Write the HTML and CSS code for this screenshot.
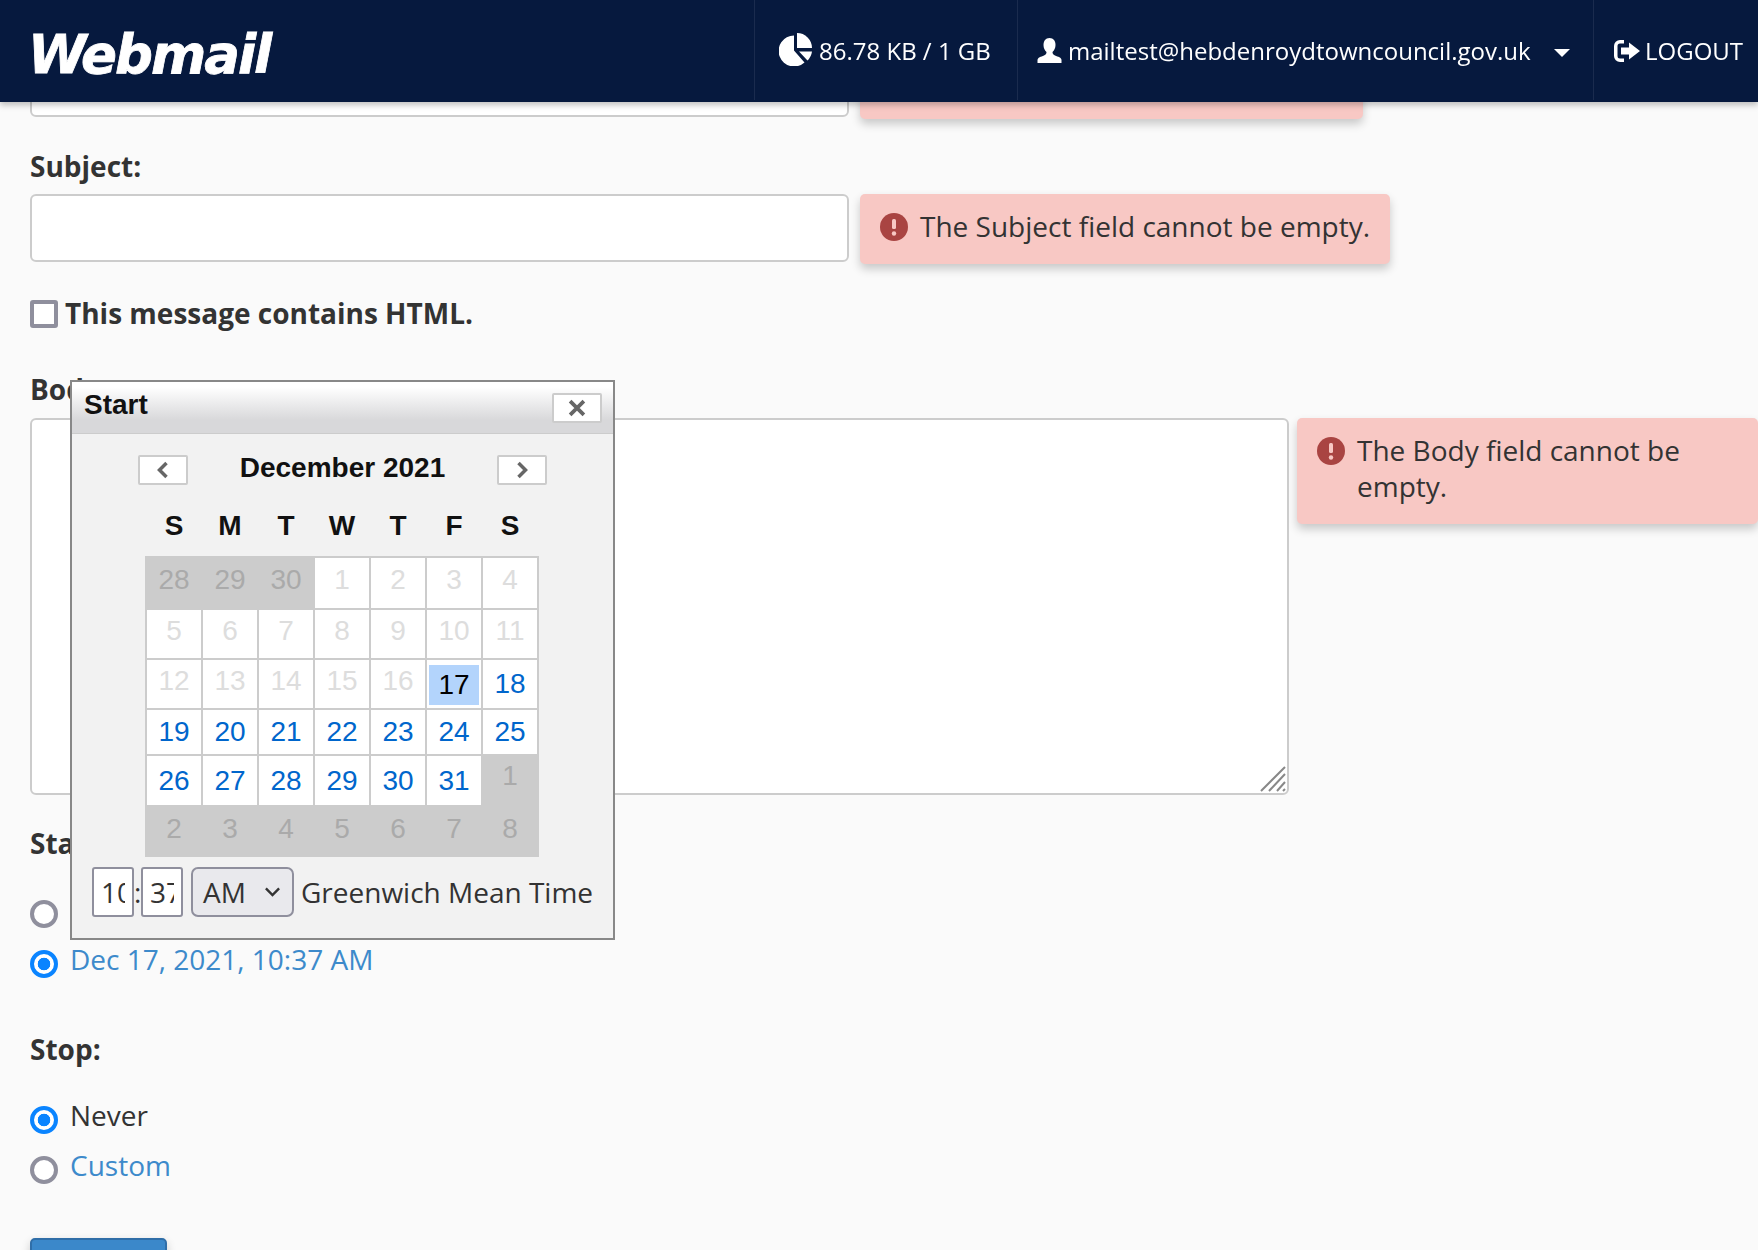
FILE: index.html
```html
<!DOCTYPE html>
<html lang="en">
<head>
<meta charset="utf-8">
<title>Webmail</title>
<link rel="stylesheet" href="styles.css">
</head>
<body>
<header class="topbar">
  <div class="logo">Webmail</div>
  <nav class="topnav">
    <div class="topitem storage">
      <svg class="ico-pie" viewBox="0 0 33 33"><path d="M15 2.500A15.500 15.500 0 1 0 25.500 29.500L15 17.500Z"/><path d="M18 0A15 15 0 0 1 33 15H18Z"/><path d="M20 18.500H33A15.500 15.500 0 0 1 28.500 27.500Z"/></svg>
      <span>86.78 KB / 1 GB</span>
    </div>
    <div class="topitem user">
      <svg class="ico-user" viewBox="0 0 25 25"><path d="M12.500 0C8.500 0 6.500 3 6.500 7C6.500 10 7.800 12.500 9.500 14C9.500 15.500 9 16.500 7 17.500C4 18.800 .5 19.500 .5 22V25H24.500V22C24.500 19.500 21 18.800 18 17.500C16 16.500 15.500 15.500 15.500 14C17.200 12.500 18.500 10 18.500 7C18.500 3 16.500 0 12.500 0Z"/></svg>
      <span>mailtest@hebdenroydtowncouncil.gov.uk</span>
      <span class="caret"></span>
    </div>
    <div class="topitem logout">
      <svg class="ico-logout" viewBox="0 0 26 22"><path d="M10 0H6A6 6 0 0 0 0 6V16A6 6 0 0 0 6 22H10V18.500H6A2.500 2.500 0 0 1 3.500 16V6A2.500 2.500 0 0 1 6 3.500H10Z"/><path d="M15 2.500L26 11L15 19.500V14.500H7V7.500H15Z"/></svg>
      <span>LOGOUT</span>
    </div>
  </nav>
</header>

<main class="form">
  <div class="row first">
    <div class="field short"></div>
    <div class="alert">
      <svg class="ico-alert" viewBox="0 0 28 28"><circle cx="14" cy="14" r="14"/><rect class="mark" x="12" y="6" width="4" height="10" rx="1.500"/><circle class="mark" cx="14" cy="20.500" r="2.200"/></svg>
      <span>The From field cannot be empty.</span>
    </div>
  </div>

  <div class="label subject-label">Subject:</div>
  <div class="row">
    <div class="field short"></div>
    <div class="alert">
      <svg class="ico-alert" viewBox="0 0 28 28"><circle cx="14" cy="14" r="14"/><rect class="mark" x="12" y="6" width="4" height="10" rx="1.500"/><circle class="mark" cx="14" cy="20.500" r="2.200"/></svg>
      <span>The Subject field cannot be empty.</span>
    </div>
  </div>

  <div class="check-row">
    <span class="checkbox"></span>
    <span class="label">This message contains HTML.</span>
  </div>

  <div class="label body-label">Body:</div>
  <div class="row body-row">
    <div class="field area">
      <svg class="grip" viewBox="0 0 26 26"><path d="M1 25L25 1M9 25L25 8M17 25L25 16M23 25L25 23"/></svg>
    </div>
    <div class="alert alert-wide">
      <svg class="ico-alert" viewBox="0 0 28 28"><circle cx="14" cy="14" r="14"/><rect class="mark" x="12" y="6" width="4" height="10" rx="1.500"/><circle class="mark" cx="14" cy="20.500" r="2.200"/></svg>
      <span>The Body field cannot be empty.</span>
    </div>
  </div>

  <div class="label start-label">Start:</div>
  <div class="radios start-radios">
    <div class="radio-row"><span class="radio"></span></div>
    <div class="radio-row"><span class="radio on"></span><span class="link">Dec 17, 2021, 10:37 AM</span></div>
  </div>

  <div class="label stop-label">Stop:</div>
  <div class="radios stop-radios">
    <div class="radio-row"><span class="radio on"></span><span>Never</span></div>
    <div class="radio-row"><span class="radio"></span><span class="link">Custom</span></div>
  </div>

  <div class="submit"></div>
</main>

<section class="popup">
  <div class="popup-title">
    <span>Start</span>
    <span class="btn btn-close"><svg viewBox="0 0 16 16"><path d="M2.500 2.500L13.500 13.500M13.500 2.500L2.500 13.500"/></svg></span>
  </div>
  <div class="popup-body">
    <div class="cal-nav">
      <span class="btn btn-nav"><svg viewBox="0 0 12 16"><path d="M9 2L3 8L9 14"/></svg></span>
      <span class="cal-month">December 2021</span>
      <span class="btn btn-nav"><svg viewBox="0 0 12 16"><path d="M3 2L9 8L3 14"/></svg></span>
    </div>
    <div class="cal-days"><span>S</span><span>M</span><span>T</span><span>W</span><span>T</span><span>F</span><span>S</span></div>
    <table class="cal">
      <tr><td class="out">28</td><td class="out">29</td><td class="out">30</td><td class="past">1</td><td class="past">2</td><td class="past">3</td><td class="past">4</td></tr>
      <tr><td class="past">5</td><td class="past">6</td><td class="past">7</td><td class="past">8</td><td class="past">9</td><td class="past">10</td><td class="past">11</td></tr>
      <tr><td class="past">12</td><td class="past">13</td><td class="past">14</td><td class="past">15</td><td class="past">16</td><td class="today"><span>17</span></td><td>18</td></tr>
      <tr><td>19</td><td>20</td><td>21</td><td>22</td><td>23</td><td>24</td><td>25</td></tr>
      <tr><td>26</td><td>27</td><td>28</td><td>29</td><td>30</td><td>31</td><td class="out up">1</td></tr>
      <tr class="last"><td class="out">2</td><td class="out">3</td><td class="out">4</td><td class="out">5</td><td class="out">6</td><td class="out">7</td><td class="out">8</td></tr>
    </table>
    <div class="time-row">
      <input class="time" type="text" value="10" size="2">
      <span class="colon">:</span>
      <input class="time" type="text" value="37" size="2">
      <span class="select">AM<svg viewBox="0 0 14 10"><path d="M1.500 2L7 7.500L12.500 2"/></svg></span>
      <span class="zone">Greenwich Mean Time</span>
    </div>
  </div>
</section>
</body>
</html>
```
FILE: styles.css
```css
* { box-sizing: border-box; }
html, body { margin: 0; height: 1250px; overflow: hidden; }
body {
  background: #fafafa;
  color: #333;
  font-family: "Open Sans", sans-serif;
  font-size: 28px;
  line-height: 36px;
  position: relative;
}

/* top bar */
.topbar {
  position: fixed;
  top: 0; left: 0; right: 0;
  height: 102px;
  background: #06193e;
  color: #fff;
  display: flex;
  justify-content: space-between;
  box-shadow: 0 3px 6px rgba(0,0,0,.25);
  z-index: 2;
  font-size: 24px;
}
.logo {
  margin: 27px 0 0 28px;
  font-family: "DejaVu Sans", sans-serif;
  font-weight: 700;
  font-style: italic;
  font-size: 53px;
  line-height: 56px;
  letter-spacing: -2px;
  -webkit-text-stroke: .8px #fff;
}
.topnav { display: flex; height: 100px; }
.topitem {
  display: flex;
  align-items: center;
  padding-top: 2px;
  border-left: 1px solid #1a2b4e;
}
.topitem svg { flex: none; }
.storage { width: 263px; padding-left: 24px; gap: 7px; }
.user { width: 576px; padding-left: 19px; gap: 6px; }
.logout { width: 165px; padding-left: 20px; gap: 5px; }
.ico-pie { width: 33px; height: 33px; fill: #fff; margin-top: -3px; }
.ico-user { width: 25px; height: 25px; fill: #fff; margin-top: -2px; }
.ico-logout { width: 26px; height: 22px; fill: #fff; margin-top: -1px; }
.caret {
  margin: 4px 0 0 17px;
  border-top: 8px solid #fff;
  border-left: 8px solid transparent;
  border-right: 8px solid transparent;
}

/* form */
.form { padding: 49px 0 0 30px; }
.label { font-weight: 700; }
.row { display: flex; gap: 11px; align-items: flex-start; }
.field {
  background: #fff;
  border: 2px solid #ccc;
  border-radius: 6px;
  position: relative;
}
.short { width: 819px; height: 68px; flex: none; }
.area { width: 1259px; height: 377px; flex: none; margin-right: -3px; }
.alert {
  display: flex;
  gap: 12px;
  align-items: flex-start;
  background: #f8c8c4;
  border-radius: 5px;
  padding: 14px 20px 20px 20px;
  box-shadow: 0 5px 10px rgba(0,0,0,.2);
}
.first { height: 71px; }
.ico-alert { width: 28px; height: 28px; flex: none; margin-top: 5px; fill: #a94442; }
.ico-alert .mark { fill: #f8c8c4; }
.subject-label { margin-top: 28px; margin-bottom: 10px; }
.check-row {
  display: flex;
  align-items: center;
  gap: 7px;
  height: 36px;
  margin-top: 32px;
}
.check-row .label { margin-top: -2px; }
.checkbox {
  width: 28px; height: 28px;
  background: #fff;
  border: 4px solid #8f8f9d;
  border-radius: 3px;
}
.body-label { margin-top: 39px; margin-bottom: 11px; }
.alert-wide { flex: 1; }
.alert-wide span { max-width: 360px; }
.grip {
  position: absolute;
  right: 1px; bottom: 1px;
  width: 26px; height: 26px;
  stroke: #888;
  stroke-width: 2;
  fill: none;
}
.start-label { margin-top: 30px; }
.radios { display: flex; flex-direction: column; }
.start-radios { margin-top: 30px; }
.stop-label { margin-top: 40px; }
.stop-radios { margin-top: 30px; }
.radio-row { display: flex; gap: 12px; height: 50px; align-items: flex-start; }
.radio {
  width: 28px; height: 28px;
  margin-top: 9px;
  flex: none;
  border-radius: 50%;
  background: #fff;
  border: 4px solid #8f8f9d;
}
.radio.on {
  border-color: #0a84ff;
  background: radial-gradient(circle, #0a84ff 0 6px, #fff 6.600px);
}
.link { color: #3d8acb; }
.submit {
  margin-top: 41px;
  width: 137px; height: 60px;
  background: #3b88ca;
  border: 2px solid #2f6ea8;
  border-radius: 5px;
  box-shadow: 0 4px 10px rgba(0,0,0,.2);
}

/* calendar popup */
.popup {
  position: absolute;
  left: 70px; top: 380px;
  width: 545px; height: 560px;
  background: #f2f2f2;
  border: 2px solid #888;
  z-index: 1;
}
.popup-title {
  height: 52px;
  padding: 0 11px 0 12px;
  display: flex;
  align-items: flex-start;
  justify-content: space-between;
  background: linear-gradient(#fff 10%, #d8d8da 75%);
  border-bottom: 1px solid #ccc;
  font-family: "Liberation Sans", sans-serif;
  font-weight: 700;
  font-size: 28px;
  line-height: 46px;
  color: #111;
}
.btn {
  display: flex;
  align-items: center;
  justify-content: center;
  width: 50px; height: 30px;
  background: #fff;
  border: 2px solid #ccc;
  border-radius: 2px;
}
.btn-close { margin-top: 11px; }
.btn svg { fill: none; stroke: #666; stroke-width: 3; }
.btn-close svg { width: 20px; height: 20px; }
.btn-nav svg { width: 14px; height: 20px; }
.popup-body { padding: 21px 0 0 20px; font-family: "Liberation Sans", sans-serif; font-size: 28px; }
.cal-nav {
  width: 409px;
  margin-left: 46px;
  height: 30px;
  display: flex;
  justify-content: space-between;
  align-items: center;
}
.cal-month { font-weight: 700; color: #111; position: relative; top: -2px; }
.cal-days {
  display: grid;
  grid-template-columns: repeat(7, 56px);
  margin: 23px 0 0 54px;
  font-weight: 700;
  color: #111;
  text-align: center;
}
.cal {
  margin: 12px 0 0 53px;
  border-collapse: collapse;
  table-layout: fixed;
  width: 394px;
}
.cal td {
  padding: 0;
  border: 2px solid #ccc;
  background: #fff;
  color: #06c;
  text-align: center;
  line-height: 30px;
}
.cal tr:nth-child(1) { height: 52px; }
.cal tr:nth-child(2) { height: 50px; }
.cal tr:nth-child(3) { height: 50px; }
.cal tr:nth-child(4) { height: 46px; }
.cal tr:nth-child(5) { height: 51px; }
.cal tr:nth-child(6) { height: 50px; }
.cal td.past { color: #ddd; padding-bottom: 6px; }
.cal td.out { background: #ccc; color: #aaa; padding-bottom: 6px; }
.cal .last td.out { padding-bottom: 4px; }
.cal td.up { padding-bottom: 10px; }
.cal td.today { color: #000; padding: 4px 2px 2px; }
.today span { display: block; background: #b3d4fc; line-height: 40px; }
.time-row {
  display: flex;
  align-items: center;
  height: 50px;
  margin-top: 10px;
  font-family: "Open Sans", sans-serif;
  font-size: 28px;
  color: #333;
}
.time {
  width: 42px; height: 50px;
  padding: 0 7px;
  border: 2px solid #8f8f9d;
  border-radius: 3px;
  background: #fff;
  color: #333;
  font: inherit;
  outline: none;
}
.colon { width: 7px; text-align: center; }
.select {
  width: 103px; height: 50px;
  margin-left: 8px;
  padding-left: 10px;
  display: flex;
  align-items: center;
  justify-content: space-between;
  padding-right: 11px;
  background: #e9e9ed;
  border: 2px solid #8f8f9d;
  border-radius: 7px;
}
.select svg { width: 17px; height: 12px; fill: none; stroke: #333; stroke-width: 2; }
.zone { margin-left: 7px; white-space: nowrap; }
```
